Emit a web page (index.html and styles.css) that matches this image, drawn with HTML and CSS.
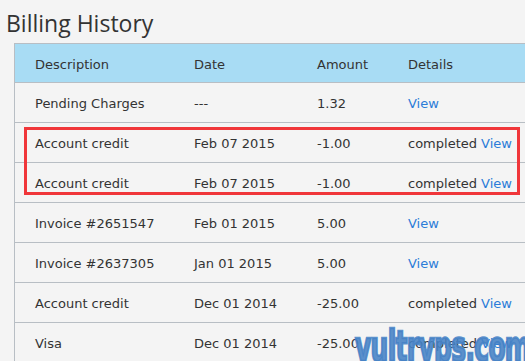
FILE: index.html
```html
<!DOCTYPE html>
<html>
<head>
<meta charset="utf-8">
<link rel="stylesheet" href="styles.css">
</head>
<body>
<h1 class="title">Billing History</h1>
<div class="table-wrap">
  <table class="billing">
    <thead>
      <tr><th class="c-desc">Description</th><th class="c-date">Date</th><th class="c-amt">Amount</th><th class="c-det">Details</th></tr>
    </thead>
    <tbody>
      <tr><td>Pending Charges</td><td>---</td><td>1.32</td><td><a href="#">View</a></td></tr>
      <tr><td>Account credit</td><td>Feb 07 2015</td><td>-1.00</td><td>completed <a href="#">View</a></td></tr>
      <tr><td>Account credit</td><td>Feb 07 2015</td><td>-1.00</td><td>completed <a href="#">View</a></td></tr>
      <tr><td>Invoice #2651547</td><td>Feb 01 2015</td><td>5.00</td><td><a href="#">View</a></td></tr>
      <tr><td>Invoice #2637305</td><td>Jan 01 2015</td><td>5.00</td><td><a href="#">View</a></td></tr>
      <tr><td>Account credit</td><td>Dec 01 2014</td><td>-25.00</td><td>completed <a href="#">View</a></td></tr>
      <tr><td>Visa</td><td>Dec 01 2014</td><td>-25.00</td><td>completed <a href="#">View</a></td></tr>
    </tbody>
  </table>
  <div class="highlight"></div>
</div>
<div class="watermark">vultrvps.com</div>
</body>
</html>
```
FILE: styles.css
```css
html, body {
  margin: 0;
  padding: 0;
  background: #f4f4f4;
  overflow: hidden;
  height: 361px;
}
body {
  font-family: "DejaVu Sans", sans-serif;
  color: #333;
  position: relative;
}
.title {
  margin: 0;
  padding: 9px 0 0 6px;
  height: 43px;
  box-sizing: border-box;
  font-family: "Open Sans", sans-serif;
  font-weight: 400;
  font-size: 23px;
  line-height: 28px;
  color: #333;
}
.table-wrap {
  position: relative;
  margin-left: 14px;
  width: 560px;
}
.billing {
  border-collapse: collapse;
  width: 100%;
  border-left: 1px solid #b8bec4;
  border-top: 1px solid #b8bec4;
  font-size: 13px;
  table-layout: fixed;
}
.billing th, .billing td {
  text-align: left;
  font-weight: 400;
  padding: 2px 0 0 20px;
  height: 37px;
  border-bottom: 1px solid #b8bec4;
  white-space: nowrap;
  color: #333;
}
.billing thead th {
  background: #a8dcf4;
  height: 36px;
}
.c-desc { width: 139px; }
.c-date { width: 103px; }
.c-amt { width: 71px; }
.billing th.c-det { width: auto; }
.billing a {
  color: #2b7cd8;
  text-decoration: none;
}
.highlight {
  position: absolute;
  left: 10px;
  top: 84px;
  width: 490px;
  height: 62px;
  border: 3px solid #f0363a;
}
.watermark {
  position: absolute;
  left: 355px;
  top: 326px;
  font-family: "DejaVu Sans Condensed", "DejaVu Sans", sans-serif;
  font-weight: 700;
  font-size: 42px;
  letter-spacing: -1px;
  line-height: 42px;
  white-space: nowrap;
  color: rgba(70, 130, 198, 0.88);
  -webkit-text-stroke: 2.5px rgba(70, 130, 198, 0.88);
  transform: scaleX(0.66);
  transform-origin: left top;
}
```
